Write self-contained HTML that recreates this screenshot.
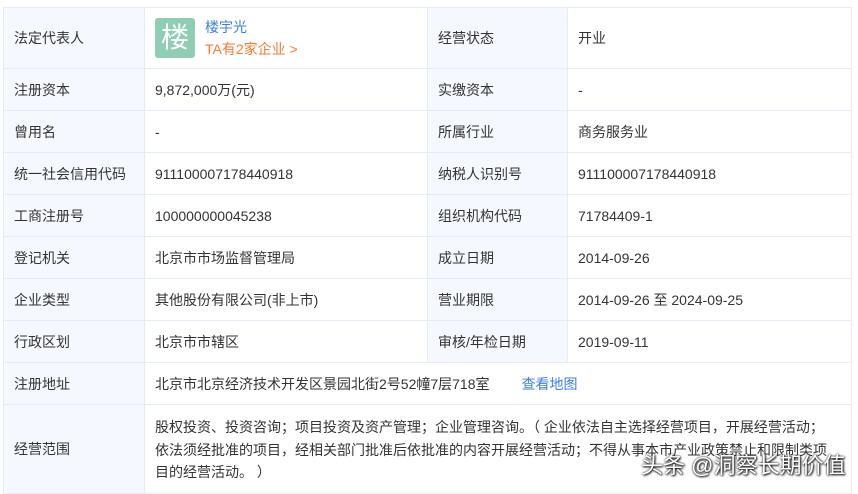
<!DOCTYPE html>
<html><head><meta charset="utf-8"><style>
body{margin:0;background:#fff;width:858px;height:489px;overflow:hidden;position:relative;font-family:"Liberation Sans","Noto Sans CJK SC",sans-serif;font-size:14px;color:#333}
table{position:absolute;left:3px;top:7px;border-collapse:collapse;table-layout:fixed;width:848px}
td{border:1px solid #e4ecf7;padding:0 0 0 10px;height:41px;vertical-align:middle;white-space:nowrap;overflow:hidden}
td.l{background:#f5f9ff}
.av{display:inline-block;width:40px;height:40px;background:#8fcdb5;color:#fff;border-radius:3px;font-size:28px;line-height:40px;text-align:center;vertical-align:middle}
.b{color:#3b7fe8}
.o{color:#fb7a33}
.wm{position:absolute;left:641px;top:448px;font-size:22px;color:#fff;text-shadow:0 0 2px #000,1px 1px 2px #000;white-space:nowrap}
</style></head><body>
<table>
<colgroup><col style="width:141px"><col style="width:283px"><col style="width:140px"><col style="width:284px"></colgroup>
<tr><td class="l" style="height:60px">法定代表人</td><td><span class="av">楼</span><span style="display:inline-block;vertical-align:middle;margin-left:10px;line-height:22px"><span class="b">楼宇光</span><br><span class="o">TA有2家企业 &gt;</span></span></td><td class="l">经营状态</td><td>开业</td></tr>
<tr><td class="l">注册资本</td><td>9,872,000万(元)</td><td class="l">实缴资本</td><td>-</td></tr>
<tr><td class="l">曾用名</td><td>-</td><td class="l">所属行业</td><td>商务服务业</td></tr>
<tr><td class="l">统一社会信用代码</td><td>911100007178440918</td><td class="l">纳税人识别号</td><td>911100007178440918</td></tr>
<tr><td class="l">工商注册号</td><td>100000000045238</td><td class="l">组织机构代码</td><td>71784409-1</td></tr>
<tr><td class="l">登记机关</td><td>北京市市场监督管理局</td><td class="l">成立日期</td><td>2014-09-26</td></tr>
<tr><td class="l">企业类型</td><td>其他股份有限公司(非上市)</td><td class="l">营业期限</td><td>2014-09-26 至 2024-09-25</td></tr>
<tr><td class="l">行政区划</td><td>北京市市辖区</td><td class="l">审核/年检日期</td><td>2019-09-11</td></tr>
<tr><td class="l">注册地址</td><td colspan="3">北京市北京经济技术开发区景园北街2号52幢7层718室<span class="b" style="margin-left:32px">查看地图</span></td></tr>
<tr><td class="l" style="height:88px">经营范围</td><td colspan="3" style="line-height:22.5px;padding-top:2px">股权投资、投资咨询；项目投资及资产管理；企业管理咨询。（ 企业依法自主选择经营项目，开展经营活动；<br>依法须经批准的项目，经相关部门批准后依批准的内容开展经营活动；不得从事本市产业政策禁止和限制类项<br>目的经营活动。 ）</td></tr>
</table>
<div class="wm">头条 @洞察长期价值</div>
</body></html>
